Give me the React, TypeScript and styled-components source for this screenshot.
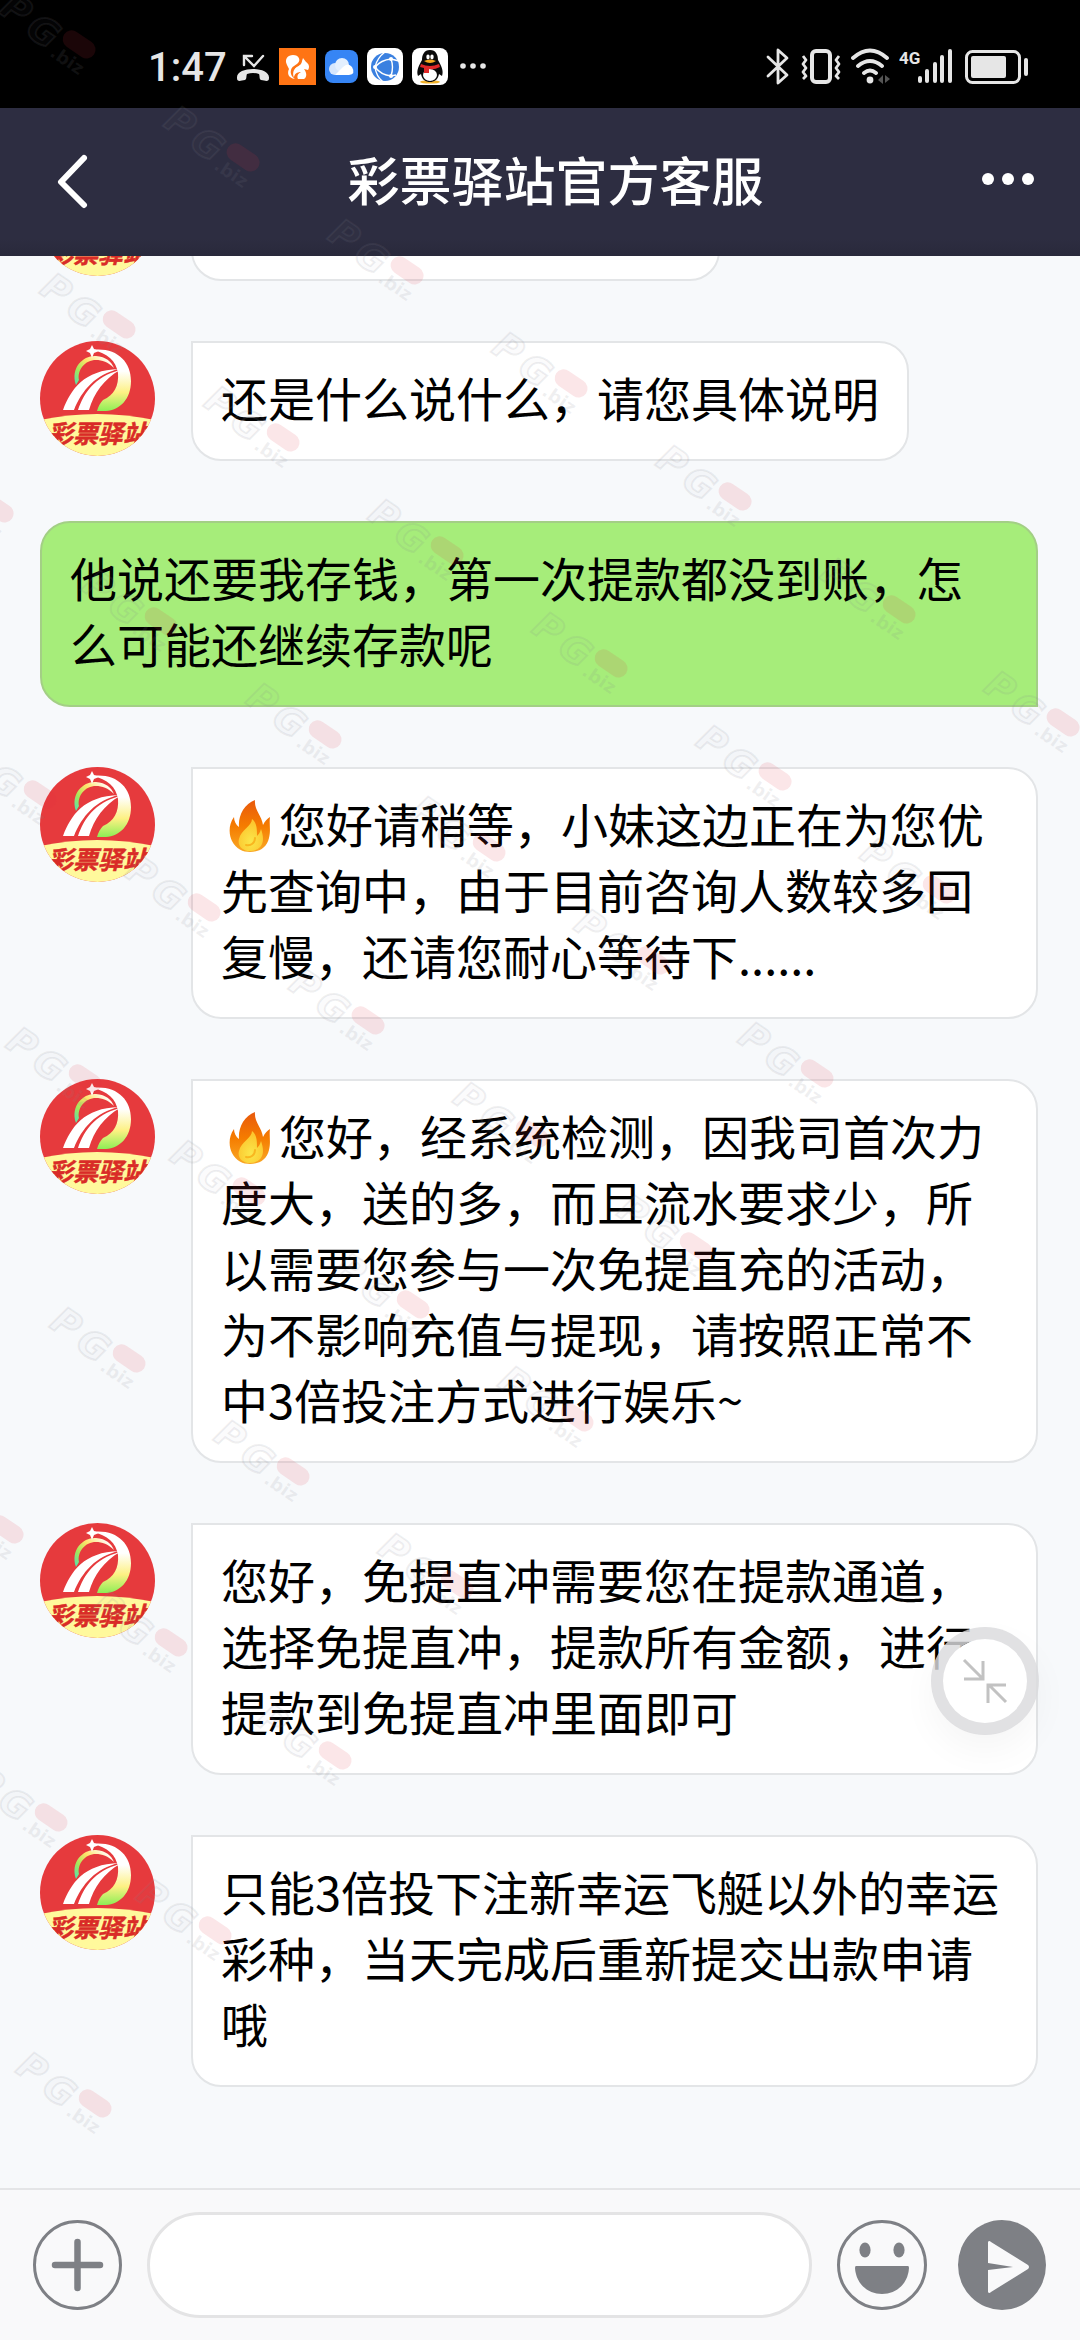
import React from "react";
import styled, { createGlobalStyle } from "styled-components";

const GlobalStyle = createGlobalStyle`
  *, *::before, *::after { box-sizing: border-box; }
  body {
    margin: 0;
    background: #f7f9fb;
    font-family: "Noto Sans CJK SC", "Noto Sans", sans-serif;
  }
  button { margin: 0; padding: 0; border: 0; background: none; cursor: pointer; }
  svg { display: block; flex: none; }
`;

const Page = styled.div`
  position: relative;
  display: flex;
  flex-direction: column;
  height: 100vh;
  overflow: hidden;
`;

const StatusBar = styled.div`
  flex: none;
  display: flex;
  align-items: center;
  justify-content: space-between;
  height: 108px;
  padding: 24px 52px 0 148px;
  background: #000;
`;

const StatusGroup = styled.div<{ $gap: number }>`
  display: flex;
  align-items: center;
  gap: ${(p) => p.$gap}px;
`;

const Clock = styled.time`
  padding-top: 4px;
  color: #e6e6e6;
  font: 500 40px/48px Roboto, "Noto Sans", sans-serif;
`;

const Header = styled.header`
  flex: none;
  display: flex;
  align-items: center;
  height: 148px;
  padding: 0 46px 0 57px;
  background: linear-gradient(#2d2d41 88%, #29293b);
`;

const BackButton = styled.button`
  width: 72px;
  height: 72px;
  display: flex;
  align-items: center;
`;

const MoreButton = styled.button`
  height: 72px;
  display: flex;
  align-items: center;
`;

const Title = styled.h1`
  flex: 1;
  margin: 0;
  padding-bottom: 6px;
  color: #fff;
  font-size: 52px;
  font-weight: 500;
  line-height: 72px;
  text-align: center;
`;

const Chat = styled.main`
  flex: 1;
  min-height: 0;
  display: flex;
  flex-direction: column;
  justify-content: flex-end;
  gap: 60px;
  padding: 0 42px 101px 40px;
  overflow: hidden;
  background: #f7f9fb;
`;

const Row = styled.article`
  flex: none;
  display: flex;
  align-items: flex-start;
  gap: 36px;
`;

const Bubble = styled.p<{ $mine?: boolean }>`
  min-width: 0;
  min-height: 120px;
  margin: 0;
  padding: 21px 28px 29px;
  border: 2px solid ${(p) => (p.$mine ? "#a3cf85" : "#e3e5e7")};
  border-radius: ${(p) => (p.$mine ? "30px 30px 0 30px" : "0 30px 30px 30px")};
  background: ${(p) => (p.$mine ? "#a6ed7a" : "#fff")};
  color: #000;
  font-size: 47px;
  line-height: 66px;
`;

const EmptyBubble = styled(Bubble)`
  width: 529px;
`;

const Emoji = styled.span`
  display: inline-block;
  width: 58px;
  height: 66px;
  vertical-align: top;
  padding: 9px 0 0 8px;
`;

const Composer = styled.form`
  flex: none;
  display: flex;
  align-items: center;
  gap: 25px;
  padding: 22px 34px 22px 33px;
  border-top: 2px solid #e4e5e7;
  background: #f9f9fa;
`;

const MessageInput = styled.input`
  flex: 1;
  min-width: 0;
  height: 106px;
  padding: 0 44px;
  border: 3px solid #e4e4e5;
  border-radius: 53px;
  outline: none;
  background: #fff;
  font: 400 47px/66px "Noto Sans CJK SC", sans-serif;
`;

const Actions = styled.div`
  display: flex;
  gap: 31px;
`;

const CollapseButton = styled.button`
  position: absolute;
  right: 41px;
  bottom: 605px;
  display: flex;
  align-items: center;
  justify-content: center;
  width: 108px;
  height: 108px;
  border: 12px solid rgba(218, 218, 221, 0.82);
  border-radius: 50%;
  background: #fff;
  background-clip: padding-box;
  box-shadow: 0 16px 36px rgba(0, 0, 0, 0.04);
`;

const WatermarkLayer = styled.div`
  position: absolute;
  inset: 0;
  overflow: hidden;
  pointer-events: none;
`;

const WatermarkMark = styled.svg`
  position: absolute;
  overflow: visible;
`;

const watermarkChains = [
  { x: 2, y: -4, count: 7 },
  { x: 42, y: 276, count: 6 },
  { x: -80, y: 460, count: 6 },
  { x: -37, y: 746, count: 5 },
  { x: 8, y: 1030, count: 4 },
  { x: 52, y: 1310, count: 3 },
  { x: -70, y: 1481, count: 3 },
  { x: -26, y: 1769, count: 2 },
  { x: 18, y: 2055, count: 1 },
];

const Watermark = () => (
  <WatermarkLayer aria-hidden="true">
    {watermarkChains.flatMap((chain) =>
      Array.from({ length: chain.count }, (_, i) => (
        <WatermarkMark
          key={`${chain.y}-${i}`}
          width="100"
          height="84"
          style={{ left: chain.x + i * 164, top: chain.y + i * 113 }}
        >
          <g transform="rotate(34)" fontFamily="DejaVu Sans, sans-serif" fontWeight="700">
            <g
              fontSize="37"
              fontStyle="italic"
              fill="rgba(150,150,160,.05)"
              stroke="rgba(130,130,140,.13)"
              strokeWidth="2"
            >
              <text x="6" y="16">P</text>
              <text x="39" y="19">G</text>
            </g>
            <text x="72" y="23" fontSize="18" fill="rgba(130,130,140,.12)">.biz</text>
            <rect x="73" y="-12" width="36" height="18" rx="9" fill="rgba(225,50,65,.12)" />
          </g>
        </WatermarkMark>
      ))
    )}
  </WatermarkLayer>
);

const Avatar = ({ id }: { id: string }) => (
  <svg width="115" height="115" viewBox="0 0 115 115" role="img" aria-label="彩票驿站">
    <defs>
      <clipPath id={`${id}-disc`}><circle cx="57.5" cy="57.5" r="57.5" /></clipPath>
      <linearGradient id={`${id}-swoosh`} x1="0" y1="0" x2="0" y2="1">
        <stop offset=".35" stopColor="#fff" />
        <stop offset=".7" stopColor="#fdf183" />
        <stop offset="1" stopColor="#8dee55" />
      </linearGradient>
      <linearGradient id={`${id}-arc`} x1="0" y1="1" x2="1" y2="0.3">
        <stop offset="0" stopColor="#4fe0b4" />
        <stop offset=".3" stopColor="#a5e65a" />
        <stop offset=".6" stopColor="#ffe36a" />
        <stop offset="1" stopColor="#fff" />
      </linearGradient>
    </defs>
    <g clipPath={`url(#${id}-disc)`}>
      <rect width="115" height="115" fill="#e63a3d" />
      <path d="M0 79Q57 67 115 79V115H0Z" fill="#fff99c" />
      <path d="M52 9C76 6 91 20 91 40C91 58 80 69 66 70L57 70Q59 63 63 59C74 54 79 45 78 32C76 20 68 12 52 9Z" fill={`url(#${id}-swoosh)`} />
      <path d="M36 44C30 26 44 14 56 15C66 16 71 20 74 27C68 21 62 19 56 19C45 19 37 29 39 39Z" fill={`url(#${id}-arc)`} />
      <path d="M23 69C31 48 44 29 79 28C56 33 42 49 34 69Z" fill="#fff" />
      <path d="M38 69C44 52 54 36 80 29C64 38 54 52 49 69Z" fill="#fff" />
      <path d="M52 4L54 8L59 10L54 12L52 17L50 12L46 10L50 8Z" fill="#fff" />
      <text x="8" y="102" fontFamily="Noto Sans CJK SC, sans-serif" fontSize="25" fontWeight="700" fontStyle="italic" fill="#d92b27" stroke="#d92b27" strokeWidth=".5">彩票驿站</text>
    </g>
  </svg>
);

const Fire = () => (
  <Emoji role="img" aria-label="火">
    <svg width="42" height="54" viewBox="0 0 42 54">
      <defs>
        <linearGradient id="flame-outer" x1="0" y1="0" x2="0" y2="1">
          <stop offset="0" stopColor="#e8590c" />
          <stop offset=".5" stopColor="#f57c00" />
          <stop offset="1" stopColor="#f9a825" />
        </linearGradient>
        <radialGradient id="flame-inner" cx=".5" cy=".7" r=".6">
          <stop offset="0" stopColor="#fbe64a" />
          <stop offset="1" stopColor="#fcc62e" />
        </radialGradient>
      </defs>
      <path d="M26 1C15 5 9 17 10 28C7 26 5 22 5 18C-1 26 0 36 3 42C7 50 14 53 21 53C31 53 38 48 40 39C42 31 40 25 41 18C38 20 36 22 34 26C33 17 25 11 26 1Z" fill="url(#flame-outer)" />
      <path d="M23 20C23 27 12 31 10 40C8 47 14 52 21 52C29 52 34 47 34 40C34 36 33 33 32 30C31 34 29 36 28 37C28 30 28 24 23 20Z" fill="url(#flame-inner)" />
      <path d="M26 39C26 44 22 47 17 46" fill="none" stroke="#f9b61f" strokeWidth="2" strokeLinecap="round" />
    </svg>
  </Emoji>
);

type Message = { id: string; text: string; fire?: boolean; mine?: boolean };

const messages: Message[] = [
  { id: "m1", text: "还是什么说什么，请您具体说明" },
  { id: "m2", text: "他说还要我存钱，第一次提款都没到账，怎么可能还继续存款呢", mine: true },
  { id: "m3", text: "您好请稍等，小妹这边正在为您优先查询中，由于目前咨询人数较多回复慢，还请您耐心等待下......", fire: true },
  { id: "m4", text: "您好，经系统检测，因我司首次力度大，送的多，而且流水要求少，所以需要您参与一次免提直充的活动，为不影响充值与提现，请按照正常不中3倍投注方式进行娱乐~", fire: true },
  { id: "m5", text: "您好，免提直冲需要您在提款通道，选择免提直冲，提款所有金额，进行提款到免提直冲里面即可" },
  { id: "m6", text: "只能3倍投下注新幸运飞艇以外的幸运彩种，当天完成后重新提交出款申请哦" },
];

const MissedCall = () => (
  <svg width="34" height="37" viewBox="0 0 34 37" fill="none" stroke="#e6e6e6" strokeWidth="2.4">
    <path d="M8 17V8H16M8 8L18 18L27 8" strokeLinecap="round" />
    <path d="M1 30C0 18 34 18 33 30C33 34 30 33 25 32C23 31 24 28 23 26Q17 24 11 26C10 28 11 31 9 32C4 33 1 34 1 30Z" fill="#e6e6e6" stroke="none" />
  </svg>
);

const Squirrel = () => (
  <svg width="37" height="37" viewBox="0 0 37 37">
    <rect width="37" height="37" fill="#ff7414" />
    <path d="M8 17C5 11 9 7 14 7C20 7 22 12 19 15C16 18 13 18 12 22C11 26 13 29 16 31C9 30 8 25 10 21Z" fill="#fff" />
    <path d="M15 30C12 23 17 18 22 16L24 10L27 14C30 16 31 19 29 22L25 21C28 25 28 29 25 31H19C18 29 18 26 22 24C18 24 15 26 15 30Z" fill="#fff" />
    <path d="M14 21C17 17 21 19 22 13" stroke="#ff7414" strokeWidth="1.5" fill="none" />
  </svg>
);

const Cloud = () => (
  <svg width="33" height="37" viewBox="0 0 33 37">
    <rect y="2" width="33" height="33" rx="8" fill="#3685f5" />
    <circle cx="10" cy="21" r="6" fill="#d5e6fd" />
    <circle cx="17" cy="17" r="7" fill="#e3effe" />
    <path d="M10 27L18 19Q23 14 27 19Q31 26 24 27Z" fill="#fff" />
  </svg>
);

const Globe = () => (
  <svg width="36" height="37" viewBox="0 0 36 37">
    <rect width="36" height="37" rx="8" fill="#fff" />
    <circle cx="18" cy="19" r="14" fill="#3a80e0" />
    <path d="M8 19Q14 12 24 11Q27 19 24 28Q14 27 8 19ZM8 19Q10 10 18 4M24 11L32 13M24 28L29 27M8 19Q9 28 16 34" fill="none" stroke="#fff" strokeWidth="1.4" />
    <g fill="#fff"><circle cx="8" cy="19" r="2" /><circle cx="24" cy="11" r="2" /><circle cx="24" cy="28" r="2" /></g>
  </svg>
);

const Penguin = () => (
  <svg width="36" height="37" viewBox="0 0 36 37">
    <rect width="36" height="37" rx="8" fill="#fff" />
    <ellipse cx="18" cy="34" rx="10" ry="1.6" fill="#f3b32b" />
    <path d="M18 2C12 2 10 7 10 12C7 17 4 23 6 28L9 26C10 32 14 34 18 34S26 32 27 26L30 28C32 23 29 17 26 12C26 7 24 2 18 2Z" fill="#0a0a0a" />
    <ellipse cx="18" cy="27" rx="7" ry="6" fill="#fff" />
    <path d="M9 16Q18 20 27 16L28 19Q22 22 17 21V25H12V20L8 19Z" fill="#e02828" />
    <ellipse cx="16" cy="9" rx="1.7" ry="2.4" fill="#fff" />
    <ellipse cx="20" cy="9" rx="1.7" ry="2.4" fill="#fff" />
    <path d="M12 13Q18 10 24 13Q18 17 12 13Z" fill="#f6a91f" />
  </svg>
);

const MoreNotifications = () => (
  <svg width="32" height="37" viewBox="0 0 32 37" fill="#e6e6e6">
    <circle cx="6" cy="18" r="2.8" /><circle cx="16" cy="18" r="2.8" /><circle cx="26" cy="18" r="2.8" />
  </svg>
);

const Bluetooth = () => (
  <svg width="25" height="37" viewBox="0 0 25 37" fill="none" stroke="#e6e6e6" strokeWidth="2.8" strokeLinejoin="round" strokeLinecap="round">
    <path d="M2 9L21 27L12 35V2L21 10L2 28" />
  </svg>
);

const Vibrate = () => (
  <svg width="42" height="37" viewBox="0 0 42 37" fill="none" stroke="#e6e6e6" strokeLinejoin="round">
    <rect x="12" y="3" width="18" height="31" rx="4" strokeWidth="4" />
    <path d="M3 8L6 12L3 16L6 20L3 24L6 28L3 31M39 8L36 12L39 16L36 20L39 24L36 28L39 31" strokeWidth="2.8" />
  </svg>
);

const Wifi = () => (
  <svg width="39" height="37" viewBox="0 0 39 37" fill="none" stroke="#e6e6e6" strokeWidth="3.8" strokeLinecap="round">
    <path d="M2 10Q19 -5 36 10M7 18Q19 8 31 18M13 25Q19 20 25 25" />
    <circle cx="19" cy="32" r="3.4" fill="#e6e6e6" stroke="none" />
    <path d="M27 32L32 27V36ZM34 27L39 31L34 35Z" fill="#555" stroke="none" />
  </svg>
);

const Signal = () => (
  <svg width="57" height="37" viewBox="0 0 57 37" fill="#e6e6e6">
    <text x="0" y="16" fontFamily="Roboto, sans-serif" fontSize="17" fontWeight="700">4G</text>
    <rect x="19" y="28" width="4" height="7" rx="2" />
    <rect x="26" y="21" width="4" height="14" rx="2" />
    <rect x="34" y="14" width="4" height="21" rx="2" />
    <rect x="41" y="7" width="4" height="28" rx="2" />
    <rect x="49" y="1" width="4" height="34" rx="2" />
  </svg>
);

const Battery = () => (
  <svg width="63" height="37" viewBox="0 0 63 37">
    <rect x="1.5" y="3.5" width="53" height="31" rx="6" fill="none" stroke="#e6e6e6" strokeWidth="3" />
    <rect x="6" y="8" width="35" height="22" rx="2" fill="#e6e6e6" />
    <rect x="59" y="10" width="4" height="18" rx="2" fill="#e6e6e6" />
  </svg>
);

export default function App() {
  return (
    <Page>
      <GlobalStyle />
      <StatusBar>
        <StatusGroup $gap={9}>
          <Clock>1:47</Clock>
          <MissedCall />
          <Squirrel />
          <Cloud />
          <Globe />
          <Penguin />
          <MoreNotifications />
        </StatusGroup>
        <StatusGroup $gap={9}>
          <Bluetooth />
          <Vibrate />
          <Wifi />
          <Signal />
          <Battery />
        </StatusGroup>
      </StatusBar>
      <Header>
        <BackButton type="button" aria-label="返回">
          <svg width="32" height="56" viewBox="0 0 32 56" fill="none" stroke="#fff" strokeWidth="6" strokeLinecap="round" strokeLinejoin="round">
            <path d="M27 4L4 28L27 51" />
          </svg>
        </BackButton>
        <Title>彩票驿站官方客服</Title>
        <MoreButton type="button" aria-label="更多">
          <svg width="52" height="18" viewBox="0 0 52 18" fill="#fff">
            <circle cx="6" cy="6" r="6" /><circle cx="26" cy="6" r="6" /><circle cx="46" cy="6" r="6" />
          </svg>
        </MoreButton>
      </Header>
      <Chat>
        <Row>
          <Avatar id="m0" />
          <EmptyBubble />
        </Row>
        {messages.map((m) => (
          <Row key={m.id}>
            {!m.mine && <Avatar id={m.id} />}
            <Bubble $mine={m.mine}>
              {m.fire && <Fire />}
              {m.text}
            </Bubble>
          </Row>
        ))}
      </Chat>
      <Composer onSubmit={(e) => e.preventDefault()}>
        <button type="button" aria-label="添加">
          <svg width="89" height="90" viewBox="0 0 89 90" fill="none" stroke="#7e8085">
            <ellipse cx="44.5" cy="45" rx="43" ry="43.5" strokeWidth="3" />
            <path d="M44.5 22V68M22 45H67" strokeWidth="6.5" strokeLinecap="round" />
          </svg>
        </button>
        <MessageInput type="text" aria-label="消息" />
        <Actions>
          <button type="button" aria-label="表情">
            <svg width="90" height="90" viewBox="0 0 90 90" fill="#7e8085">
              <circle cx="45" cy="45" r="43.5" fill="none" stroke="#7e8085" strokeWidth="3" />
              <ellipse cx="28" cy="30" rx="5.6" ry="7.5" />
              <ellipse cx="62" cy="30" rx="5.6" ry="7.5" />
              <path d="M19 46H71Q72 46 72 48C71 64 59 74 45 74S19 64 18 48Q18 46 19 46Z" />
            </svg>
          </button>
          <button type="submit" aria-label="发送">
            <svg width="88" height="90" viewBox="0 0 88 90">
              <ellipse cx="44" cy="45" rx="44" ry="45" fill="#7e8085" />
              <path d="M30 22Q31 20 33 22L70 45Q72 47 70 49L33 72Q31 74 30 72V50L55 47L30 43Z" fill="#f9f9fa" />
            </svg>
          </button>
        </Actions>
      </Composer>
      <CollapseButton type="button" aria-label="收起">
        <svg width="46" height="46" viewBox="0 0 46 46" fill="none" stroke="#c2c2c2" strokeWidth="3">
          <path d="M2 2L20 20M21 3V21H2M44 44L27 27M26 45V27H44" />
        </svg>
      </CollapseButton>
      <Watermark />
    </Page>
  );
}
